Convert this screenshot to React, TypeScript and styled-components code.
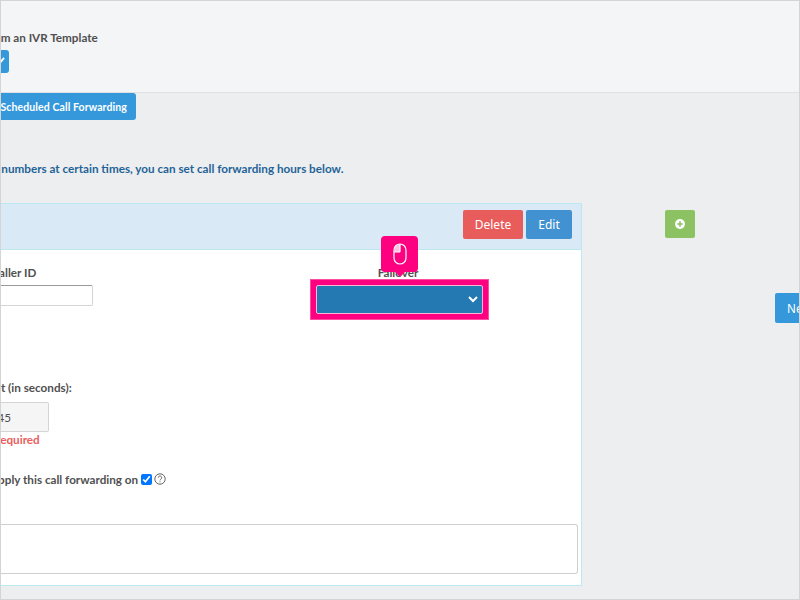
import styled, { createGlobalStyle } from "styled-components";

const GlobalStyle = createGlobalStyle`
  html, body {
    margin: 0;
    padding: 0;
    background: #edeef0;
  }
`;

const Frame = styled.div`
  box-sizing: border-box;
  width: 800px;
  height: 600px;
  overflow: hidden;
  background: #edeef0;
  border: 1px solid #d3d4d6;
  font-family: "Lato", "Liberation Sans", sans-serif;
  font-size: 11.7px;
  font-weight: 700;
  color: #505050;
`;

const TopBand = styled.section`
  box-sizing: border-box;
  height: 92px;
  padding-top: 29px;
  background: #f4f5f7;
  border-bottom: 1px solid #dfe0e2;
`;

const TopLabel = styled.div`
  margin-left: -33px;
  line-height: 15px;
  white-space: nowrap;
`;

const ToggleButton = styled.div`
  display: flex;
  align-items: center;
  justify-content: flex-end;
  box-sizing: border-box;
  width: 30px;
  height: 23px;
  margin: 5px 0 0 -22px;
  padding: 0 4px 2px 0;
  background: #3498db;
  border-radius: 3px;
  color: #fff;
`;

const ScheduleButton = styled.div`
  display: flex;
  align-items: center;
  justify-content: flex-end;
  box-sizing: border-box;
  width: 235px;
  height: 27px;
  margin-left: -100px;
  padding-right: 9px;
  background: #3498db;
  border-radius: 0 3px 3px 0;
  color: #fff;
  font-size: 10.5px;
  letter-spacing: 0.1px;
  white-space: nowrap;
`;

const HelpText = styled.p`
  margin: 40px 0 0 -215px;
  line-height: 16px;
  color: #1f6397;
  white-space: nowrap;
`;

const Columns = styled.div`
  display: flex;
  margin-top: 27px;
`;

const Panel = styled.section`
  flex: none;
  box-sizing: border-box;
  width: 581px;
  height: 383px;
  background: #fff;
  border: 1px solid #bce8f1;
  border-left: 0;
`;

const PanelHeader = styled.header`
  display: flex;
  justify-content: flex-end;
  gap: 3px;
  box-sizing: border-box;
  height: 46px;
  padding: 6px 9px 0 0;
  background: #d9eaf6;
  border-bottom: 1px solid #bce8f1;
`;

const ActionButton = styled.div<{ $bg: string; $w: number }>`
  display: flex;
  align-items: center;
  justify-content: center;
  width: ${(p) => p.$w}px;
  height: 29px;
  background: ${(p) => p.$bg};
  border-radius: 2px;
  color: #fff;
  font-family: "Noto Sans", sans-serif;
  font-size: 12px;
  font-weight: 400;
`;

const PanelBody = styled.div`
  padding: 14px 3px 0 0;
`;

const FieldRow = styled.div`
  display: flex;
  height: 115px;
`;

const CallerField = styled.div`
  width: 315px;
`;

const FieldLabel = styled.div`
  line-height: 16px;
  white-space: nowrap;
`;

const CallerLabel = styled(FieldLabel)`
  margin-left: -66px;
`;

const FailoverLabel = styled(FieldLabel)`
  margin-left: -3px;
`;

const CallerInput = styled.div`
  box-sizing: border-box;
  width: 92px;
  height: 21px;
  margin-top: 5px;
  background: #fff;
  border: 1px solid #d4d4d4;
  border-top-color: #9a9a9a;
  border-left: 0;
  border-radius: 0 2px 2px 0;
`;

const FailoverField = styled.div`
  position: relative;
  width: 167px;
  text-align: center;
`;

const SelectFrame = styled.div`
  margin: -1px -6px 0;
  padding: 6px;
  background: #ff0080;
  box-shadow: inset 0 0 0 1px #ff4da3;
`;

const SelectBox = styled.div`
  display: flex;
  align-items: center;
  justify-content: flex-end;
  box-sizing: border-box;
  height: 29px;
  padding: 0 4px 1px 0;
  background: #2479b3;
  border: 1px solid #ffb3d6;
  border-radius: 2px;
  color: #fff;
`;

const MouseTip = styled.div`
  position: absolute;
  top: -28px;
  left: 65px;
  display: flex;
  align-items: center;
  justify-content: center;
  width: 37px;
  height: 36px;
  background: #ff0080;
  border-radius: 4px;

  &::after {
    content: "";
    position: absolute;
    bottom: -5px;
    left: 14px;
    border-top: 5px solid #ff0080;
    border-left: 5px solid transparent;
    border-right: 5px solid transparent;
  }
`;

const TimeoutLabel = styled(FieldLabel)`
  margin-left: -65px;
`;

const TimeoutInput = styled.div`
  display: flex;
  align-items: center;
  justify-content: flex-end;
  box-sizing: border-box;
  width: 48px;
  height: 30px;
  margin-top: 7px;
  padding-right: 37px;
  background: #f5f5f5;
  border: 1px solid #d4d4d4;
  border-left: 0;
  border-radius: 0 2px 2px 0;
  font-weight: 400;
`;

const ErrorText = styled.div`
  margin: -1px 0 0 -66px;
  line-height: 16px;
  color: #e95e5e;
  white-space: nowrap;
`;

const ApplyRow = styled.div`
  display: flex;
  align-items: center;
  gap: 3px;
  height: 16px;
  margin: 24px 0 0 -11px;
  white-space: nowrap;
`;

const ApplyCheck = styled.input`
  width: 11px;
  height: 11px;
  margin: 0 -1px 0 0;
  accent-color: #0075ff;
`;

const NotesBox = styled.div`
  box-sizing: border-box;
  height: 50px;
  margin-top: 37px;
  background: #fff;
  border: 1px solid #cfcfcf;
  border-left: 0;
  border-radius: 0 3px 3px 0;
`;

const SideColumn = styled.aside`
  display: flex;
  flex: 1;
  padding: 7px 0 0 83px;
`;

const AddButton = styled.div`
  display: flex;
  align-items: center;
  justify-content: center;
  width: 30px;
  height: 28px;
  background: #8dc263;
  border-radius: 2px;
  color: #fff;
`;

const NextButton = styled.div`
  display: flex;
  align-items: center;
  box-sizing: border-box;
  width: 60px;
  height: 30px;
  margin: 83px 0 0 80px;
  padding-left: 12px;
  background: #3498db;
  border-radius: 2px;
  color: #fff;
  font-family: "Noto Sans", sans-serif;
  font-weight: 400;
`;

export default function App() {
  return (
    <Frame>
      <GlobalStyle />
      <TopBand>
        <TopLabel>Perform an IVR Template</TopLabel>
        <ToggleButton>
          <svg width="9" height="9" viewBox="0 0 10 10" fill="none" stroke="#fff" strokeWidth="2">
            <path d="M1 5.5 4 8 9 2" />
          </svg>
        </ToggleButton>
      </TopBand>
      <ScheduleButton>Scheduled Call Forwarding</ScheduleButton>
      <HelpText>
        If you would like to forward calls to other numbers at certain times, you can set call forwarding hours below.
      </HelpText>
      <Columns>
        <Panel>
          <PanelHeader>
            <ActionButton $bg="#e85c5c" $w={60}>Delete</ActionButton>
            <ActionButton $bg="#4292d2" $w={46}>Edit</ActionButton>
          </PanelHeader>
          <PanelBody>
            <FieldRow>
              <CallerField>
                <CallerLabel>Outbound Caller ID</CallerLabel>
                <CallerInput />
              </CallerField>
              <FailoverField>
                <FailoverLabel>Failover</FailoverLabel>
                <SelectFrame>
                  <SelectBox>
                    <svg width="10" height="8" viewBox="0 0 10 8" fill="none" stroke="#fff" strokeWidth="2">
                      <path d="M1 2 5 6 9 2" />
                    </svg>
                  </SelectBox>
                </SelectFrame>
                <MouseTip>
                  <svg width="14" height="22" viewBox="0 0 14 22" fill="none" stroke="#fff" strokeWidth="1.2">
                    <rect x="1" y="1" width="12" height="20" rx="6" />
                    <path d="M7 1v8M1 9h6" />
                    <path d="M7 1.5a5.5 5.5 0 0 0-5.5 5.5v2H7z" fill="#fff" fillOpacity="0.75" stroke="none" />
                  </svg>
                </MouseTip>
              </FailoverField>
            </FieldRow>
            <TimeoutLabel>Ring Timeout (in seconds):</TimeoutLabel>
            <TimeoutInput>45</TimeoutInput>
            <ErrorText>This field is required</ErrorText>
            <ApplyRow>
              Apply this call forwarding on
              <ApplyCheck type="checkbox" defaultChecked />
              <svg width="12" height="12" viewBox="0 0 12 12" fill="none" stroke="#555" strokeWidth="0.9">
                <circle cx="6" cy="6" r="5.2" />
                <path d="M4.3 4.7a1.7 1.7 0 1 1 2.6 1.4c-.6.4-.9.7-.9 1.3" />
                <path d="M6 8.4v1" />
              </svg>
            </ApplyRow>
            <NotesBox />
          </PanelBody>
        </Panel>
        <SideColumn>
          <AddButton>
            <svg width="10" height="10" viewBox="0 0 10 10">
              <circle cx="5" cy="5" r="5" fill="#fff" />
              <path d="M5 2.3v5.4M2.3 5h5.4" stroke="#8dc263" strokeWidth="1.6" />
            </svg>
          </AddButton>
          <NextButton>Next</NextButton>
        </SideColumn>
      </Columns>
    </Frame>
  );
}
